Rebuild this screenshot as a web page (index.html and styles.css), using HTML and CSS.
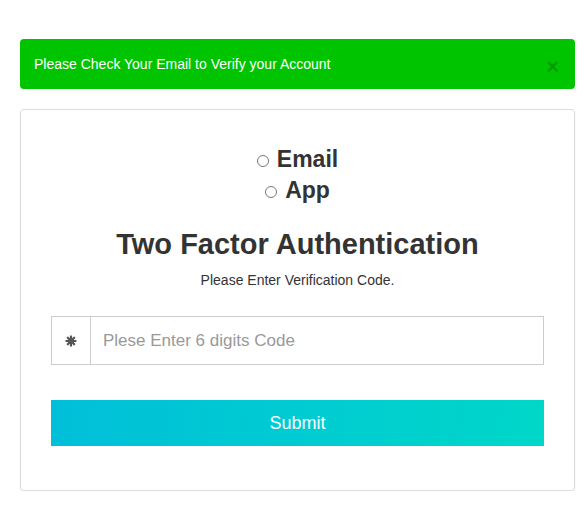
FILE: index.html
```html
<!DOCTYPE html>
<html>
<head>
<meta charset="utf-8">
<link rel="stylesheet" href="styles.css">
</head>
<body>
<div class="page">
  <div class="alert">
    <span class="alert-text">Please Check Your Email to Verify your Account</span>
    <span class="close">&times;</span>
  </div>
  <div class="card">
    <div class="methods">
      <label class="method"><span class="radio"></span>Email</label>
      <label class="method"><span class="radio"></span>App</label>
    </div>
    <h2 class="title">Two Factor Authentication</h2>
    <p class="subtitle">Please Enter Verification Code.</p>
    <div class="input-group">
      <span class="addon">
        <svg width="12" height="12" viewBox="0 0 12 12">
          <g fill="#555" transform="translate(6 6)">
            <rect x="-1.1" y="-5.5" width="2.2" height="11" rx="0.6"/>
            <rect x="-1.1" y="-5.5" width="2.2" height="11" rx="0.6" transform="rotate(45)"/>
            <rect x="-1.1" y="-5.5" width="2.2" height="11" rx="0.6" transform="rotate(90)"/>
            <rect x="-1.1" y="-5.5" width="2.2" height="11" rx="0.6" transform="rotate(135)"/>
            <circle r="3"/>
          </g>
        </svg>
      </span>
      <input class="code" type="text" placeholder="Plese Enter 6 digits Code">
    </div>
    <button class="submit">Submit</button>
  </div>
</div>
</body>
</html>
```
FILE: styles.css
```css
* { box-sizing: border-box; }
html, body { margin: 0; padding: 0; background: #fff; }
body {
  font-family: "Liberation Sans", Arial, sans-serif;
  color: #333;
}
.page {
  width: 555px;
  margin-left: 20px;
  padding-top: 39px;
}
.alert {
  display: flex;
  align-items: center;
  justify-content: space-between;
  height: 50px;
  padding: 0 16px 0 14px;
  background: #00c400;
  border-radius: 4px;
  color: #fff;
  font-size: 14px;
}
.alert-text { line-height: 20px; }
.close {
  font-size: 22px;
  font-weight: bold;
  color: #000;
  opacity: 0.2;
  line-height: 1;
  margin-top: 5px;
}
.card {
  margin-top: 20px;
  border: 1px solid #dcdcdc;
  border-radius: 4px;
  box-shadow: 0 1px 2px rgba(0,0,0,0.08);
  padding: 34px 30px 44px 30px;
  display: flex;
  flex-direction: column;
}
.methods {
  display: flex;
  flex-direction: column;
  align-items: center;
}
.method {
  display: flex;
  align-items: center;
  gap: 8px;
  font-size: 23px;
  font-weight: bold;
  line-height: 31px;
  color: #333;
}
.radio {
  width: 12px;
  height: 12px;
  border: 1px solid #777;
  border-radius: 50%;
  margin-top: 2px;
}
.title {
  margin: 22px 0 0 0;
  text-align: center;
  font-size: 29px;
  font-weight: bold;
  line-height: 33px;
  color: #333;
}
.subtitle {
  margin: 9px 0 0 0;
  text-align: center;
  font-size: 14px;
  line-height: 20px;
  color: #333;
}
.input-group {
  margin-top: 26px;
  display: flex;
  height: 49px;
  border: 1px solid #ccc;
}
.addon {
  width: 39px;
  flex: none;
  border-right: 1px solid #ccc;
  display: flex;
  align-items: center;
  justify-content: center;
}
.code {
  flex: 1;
  border: 0;
  outline: none;
  padding: 0 12px;
  font-family: "Liberation Sans", Arial, sans-serif;
  font-size: 17px;
  color: #555;
  background: #fff;
}
.code::placeholder { color: #999; }
.submit {
  margin-top: 35px;
  height: 46px;
  border: 0;
  border-radius: 0;
  background: linear-gradient(100deg, #00bfd9 0%, #00cbd2 50%, #00d7c8 100%);
  color: #fff;
  font-family: "Liberation Sans", Arial, sans-serif;
  font-size: 18px;
  cursor: pointer;
}
```
